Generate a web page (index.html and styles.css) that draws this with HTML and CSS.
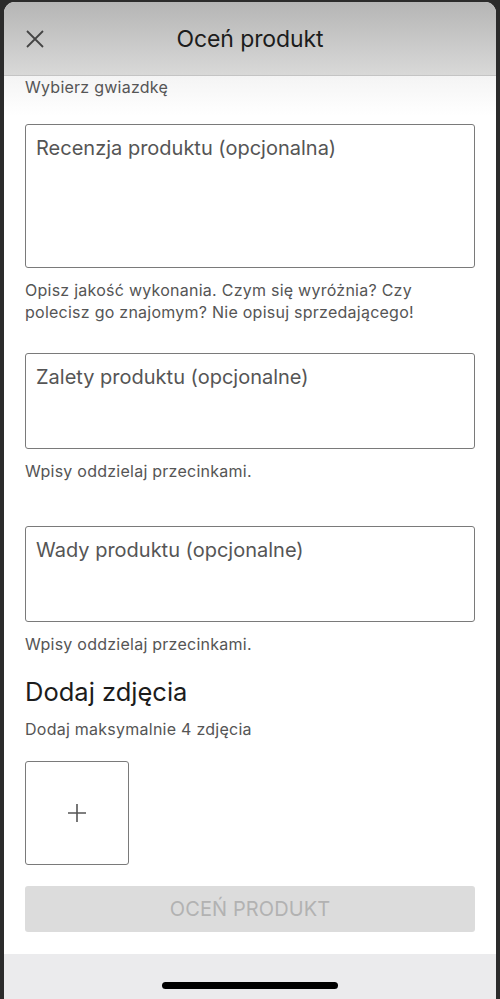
FILE: index.html
```html
<!DOCTYPE html>
<html lang="pl">
<head>
    <meta charset="UTF-8">
    <meta name="viewport" content="width=device-width, initial-scale=1.0">
    <title>Oceń produkt</title>
    <link rel="stylesheet" href="styles.css">
</head>
<body>
    <div class="sheet">
        <header class="sheet-header">
            <button class="close-btn" aria-label="Zamknij">
                <svg width="18" height="18" viewBox="0 0 18 18">
                    <path d="M1 1 L17 17 M17 1 L1 17" stroke="#444" stroke-width="1.8" fill="none"/>
                </svg>
            </button>
            <h1>Oceń produkt</h1>
        </header>

        <main class="content">
            <p class="hint stars-hint">Wybierz gwiazdkę</p>

            <div class="field field-review">
                <span class="placeholder">Recenzja produktu (opcjonalna)</span>
            </div>
            <p class="hint">Opisz jakość wykonania. Czym się wyróżnia? Czy polecisz go znajomym? Nie opisuj sprzedającego!</p>

            <div class="field field-short">
                <span class="placeholder">Zalety produktu (opcjonalne)</span>
            </div>
            <p class="hint">Wpisy oddzielaj przecinkami.</p>

            <div class="field field-short field-spaced">
                <span class="placeholder">Wady produktu (opcjonalne)</span>
            </div>
            <p class="hint">Wpisy oddzielaj przecinkami.</p>

            <h2>Dodaj zdjęcia</h2>
            <p class="hint">Dodaj maksymalnie 4 zdjęcia</p>

            <button class="add-photo" aria-label="Dodaj zdjęcie">
                <svg width="20" height="20" viewBox="0 0 20 20">
                    <path d="M10 1 V19 M1 10 H19" stroke="#555" stroke-width="1.6" fill="none"/>
                </svg>
            </button>

            <button class="submit-btn" disabled>OCEŃ PRODUKT</button>
        </main>

        <footer class="home-bar">
            <span class="home-indicator"></span>
        </footer>
    </div>
</body>
</html>
```

FILE: styles.css
```css
* {
    margin: 0;
    padding: 0;
    box-sizing: border-box;
}

body {
    font-family: Inter, "Liberation Sans", sans-serif;
    background-color: #2b2b2b;
    color: #222;
    height: 999px;
    overflow: hidden;
    padding: 2px 4px 0 4px;
}

.sheet {
    height: 997px;
    background-color: white;
    border-radius: 11px 11px 0 0;
    overflow: hidden;
    display: flex;
    flex-direction: column;
}

.sheet-header {
    height: 74px;
    flex-shrink: 0;
    display: flex;
    align-items: center;
    justify-content: center;
    position: relative;
    background: linear-gradient(#b5b5b5, #d9d9d8);
    border-bottom: 1px solid #c4c4c4;
}

.sheet-header h1 {
    font-size: 23px;
    font-weight: 400;
    color: #1c1c1c;
    letter-spacing: -0.1px;
}

.close-btn {
    position: absolute;
    left: 22px;
    top: 28px;
    background: none;
    border: none;
    display: flex;
}

.content {
    flex: 1;
    padding: 0 21px;
    display: flex;
    flex-direction: column;
    background: linear-gradient(#f4f4f4, white 40px);
}

.hint {
    font-size: 16px;
    line-height: 22px;
    letter-spacing: 0.25px;
    color: #555;
    margin-top: 11px;
}

.stars-hint {
    margin-top: 0;
}

.field {
    border: 1.5px solid #7a7a7a;
    border-radius: 3px;
    padding: 11px 10px;
}

.field-review {
    height: 144px;
    margin-top: 26px;
}

.field-short {
    height: 96px;
    margin-top: 30px;
}

.field-spaced {
    margin-top: 44px;
}

.placeholder {
    font-size: 20px;
    color: #555;
}

h2 {
    font-size: 25.5px;
    line-height: 30px;
    font-weight: 400;
    color: #1c1c1c;
    margin-top: 22px;
}

.add-photo {
    width: 104px;
    height: 104px;
    margin-top: 21px;
    border: 1.5px solid #7a7a7a;
    border-radius: 3px;
    background: white;
    display: flex;
    align-items: center;
    justify-content: center;
}

.submit-btn {
    margin-top: 21px;
    height: 46px;
    border: none;
    border-radius: 3px;
    background-color: #dcdcdc;
    color: #b2b2b2;
    font-family: inherit;
    font-size: 20px;
    letter-spacing: 0.1px;
}

.home-bar {
    height: 45px;
    flex-shrink: 0;
    background-color: #ebebed;
    display: flex;
    justify-content: center;
    align-items: flex-end;
    padding-bottom: 10px;
}

.home-indicator {
    width: 176px;
    height: 7px;
    border-radius: 4px;
    background-color: #000;
}
```
